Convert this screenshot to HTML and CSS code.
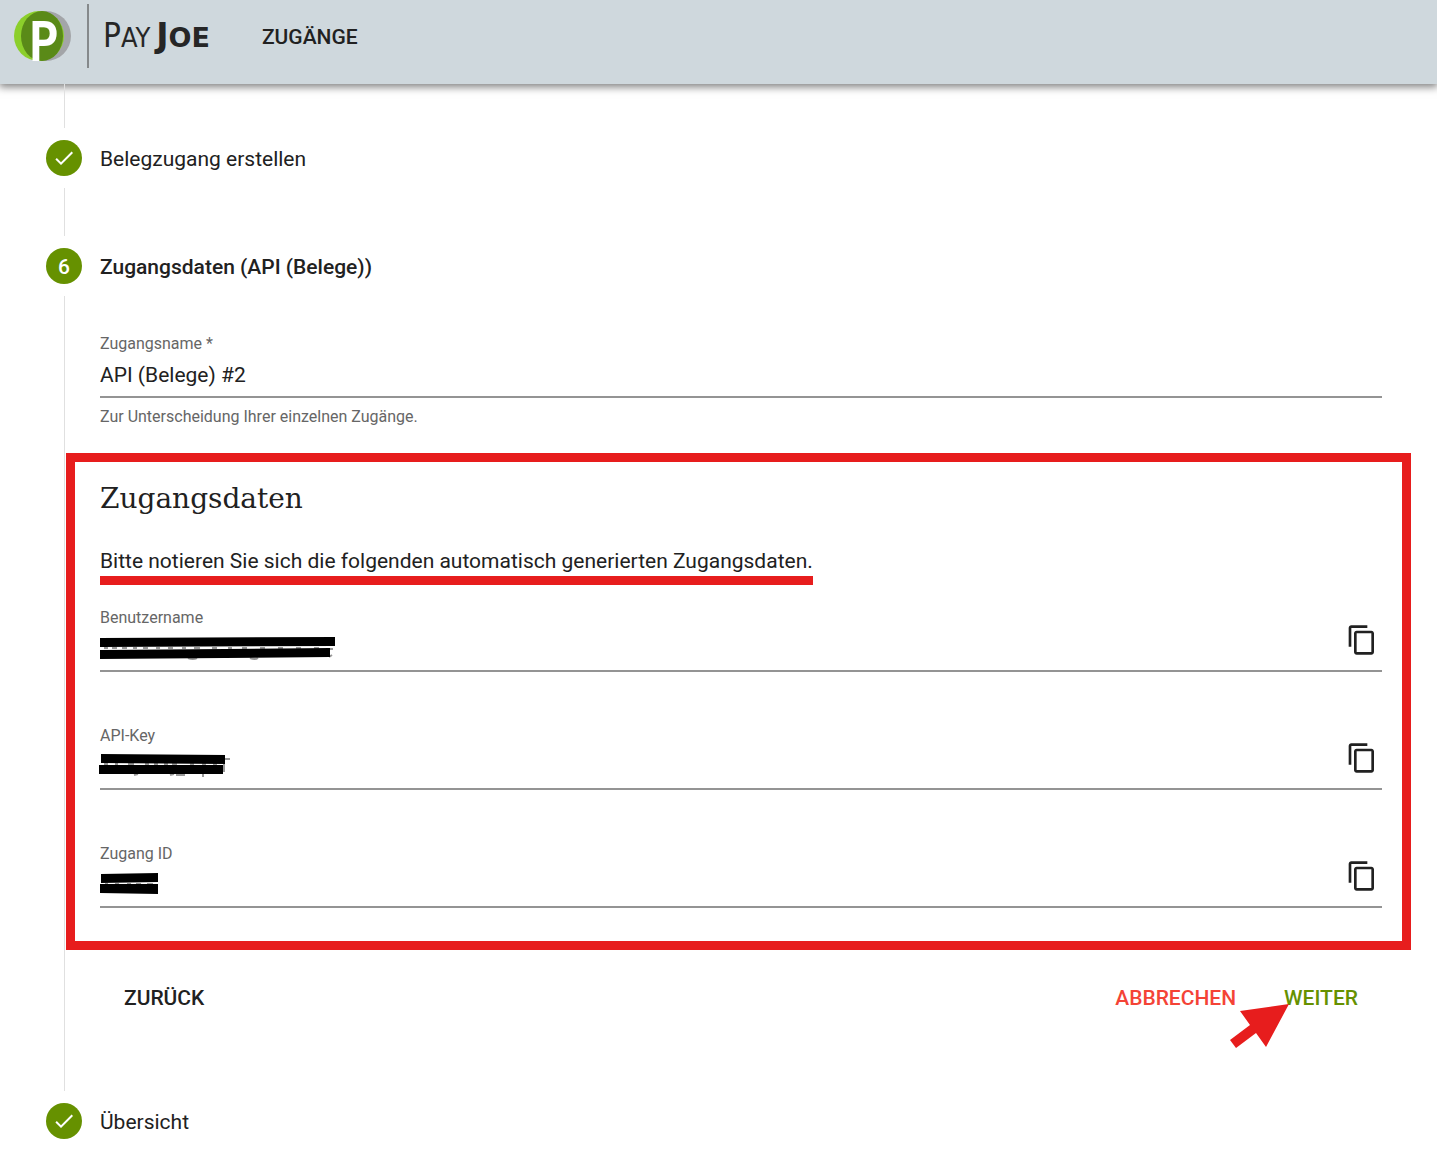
FILE: index.html
```html
<!DOCTYPE html>
<html lang="de">
<head>
<meta charset="utf-8">
<meta name="viewport" content="width=device-width, initial-scale=1">
<title>PayJoe – Zugänge</title>
<link rel="stylesheet" href="styles.css">
</head>
<body>
<svg class="sprite" aria-hidden="true">
  <symbol id="icon-copy" viewBox="0 0 24 24"><path d="M16 1H4c-1.100 0-2 .9-2 2v14h2V3h12V1zm3 4H8c-1.100 0-2 .9-2 2v14c0 1.100.9 2 2 2h11c1.100 0 2-.9 2-2V7c0-1.100-.9-2-2-2zm0 16H8V7h11v14z"/></symbol>
  <symbol id="icon-check" viewBox="0 0 24 24"><path d="M9 16.200L4.800 12l-1.400 1.400L9 19 21 7l-1.400-1.400L9 16.200z"/></symbol>
</svg>

<header class="topbar">
  <a class="brand" href="#" aria-label="PayJoe">
    <svg class="brand-mark" viewBox="0 0 58 64" aria-hidden="true">
      <circle cx="33" cy="32" r="25" fill="#a3a5a8"/>
      <circle cx="26" cy="32" r="25" fill="#8ccf2b"/>
      <ellipse cx="29" cy="32" rx="21" ry="25" fill="#5a8a18"/>
      <text class="brand-p" x="16" y="56">P</text>
    </svg>
    <span class="brand-name"><span class="brand-pay">P<small>AY</small></span><span class="brand-joe">J<small>OE</small></span></span>
  </a>
  <nav><a class="nav-link" href="#">ZUGÄNGE</a></nav>
</header>

<main class="stepper">
  <div class="step-line step-line-first"></div>

  <div class="step-head">
    <span class="step-badge"><svg viewBox="0 0 24 24" aria-hidden="true"><use href="#icon-check"/></svg></span>
    <span class="step-title">Belegzugang erstellen</span>
  </div>
  <div class="step-line"></div>

  <div class="step-head step-active">
    <span class="step-badge"><span class="step-number">6</span></span>
    <span class="step-title">Zugangsdaten (API (Belege))</span>
  </div>

  <form class="step-body">
    <div class="field">
      <label for="name">Zugangsname *</label>
      <div class="control"><input id="name" type="text" value="API (Belege) #2"></div>
      <p class="hint">Zur Unterscheidung Ihrer einzelnen Zugänge.</p>
    </div>

    <section class="credentials">
      <h2>Zugangsdaten</h2>
      <p class="notice">Bitte notieren Sie sich die folgenden automatisch generierten Zugangsdaten.</p>

      <div class="field">
        <label for="user">Benutzername</label>
        <div class="control">
          <input id="user" type="text" readonly>
          <svg class="redaction" viewBox="0 0 240 42" aria-hidden="true">
            <path class="trace" d="M4 20h4M12 20h5M22 20h5M33 20h4M43 20h5M56 20h4M68 20h5M82 20h4M94 20h6M112 20h5M128 20h4M142 20h5M160 20h5M178 20h5M196 20h5M214 20h5M88 30q5 2 9 0M150 30q5 2 8 0M227 21h6M232 27l-3 2"/>
            <path d="M0 10L235 9V18L0 19ZM0 22L230 20V29L0 31Z"/>
          </svg>
          <button class="copy" type="button" aria-label="Benutzername kopieren"><svg viewBox="0 0 24 24" aria-hidden="true"><use href="#icon-copy"/></svg></button>
        </div>
      </div>

      <div class="field">
        <label for="key">API-Key</label>
        <div class="control">
          <input id="key" type="text" readonly>
          <svg class="redaction" viewBox="0 0 240 42" aria-hidden="true">
            <path class="trace" d="M4 18h4M15 18h3M28 18h6M45 18h4M54 18h4M64 18h4M72 18h5M90 18h4M102 18h4M113 18h4M34 29l4-1M70 29l4-1M76 29h9M103 26v5M125 13h5M124 14v12"/>
            <path d="M1 8L125 9V18L1 17ZM-1 19H123V28H-1Z"/>
          </svg>
          <button class="copy" type="button" aria-label="API-Key kopieren"><svg viewBox="0 0 24 24" aria-hidden="true"><use href="#icon-copy"/></svg></button>
        </div>
      </div>

      <div class="field">
        <label for="access">Zugang ID</label>
        <div class="control">
          <input id="access" type="text" readonly>
          <svg class="redaction" viewBox="0 0 240 42" aria-hidden="true">
            <path class="trace" d="M5 20h3M15 20h4M27 20h4M36 20h5M47 20h6"/>
            <path d="M1 10L58 9V18L1 19ZM0 20H58V30L0 29Z"/>
          </svg>
          <button class="copy" type="button" aria-label="Zugang ID kopieren"><svg viewBox="0 0 24 24" aria-hidden="true"><use href="#icon-copy"/></svg></button>
        </div>
      </div>
    </section>

    <div class="actions">
      <button class="btn btn-back" type="button">ZURÜCK</button>
      <button class="btn btn-cancel" type="button">ABBRECHEN</button>
      <button class="btn btn-next" type="submit">WEITER
        <svg class="pointer" viewBox="0 0 60 45" aria-hidden="true"><path d="M59 1L10 8L20 22L0 37L6 45L26 30L36 44Z"/></svg>
      </button>
    </div>
  </form>

  <div class="step-head">
    <span class="step-badge"><svg viewBox="0 0 24 24" aria-hidden="true"><use href="#icon-check"/></svg></span>
    <span class="step-title">Übersicht</span>
  </div>
</main>
</body>
</html>
```
FILE: styles.css
```css
* {
  box-sizing: border-box;
}

body {
  margin: 0;
  background: #fff;
  color: #212121;
  font: 400 21px/30px Roboto, "Liberation Sans", sans-serif;
}

h2,
p {
  margin: 0;
}

button,
input {
  font: inherit;
  color: inherit;
}

.sprite {
  display: none;
}

/* Top bar */
.topbar {
  display: flex;
  align-items: flex-start;
  gap: 52px;
  height: 84px;
  padding: 4px 13px;
  background: #cfd8dd;
  box-shadow: 0 2px 8px 1px rgba(0, 0, 0, 0.5);
}

.brand {
  display: flex;
  align-items: center;
  gap: 16px;
  height: 64px;
  color: #262626;
  text-decoration: none;
}

.brand-mark {
  width: 58px;
  height: 64px;
  overflow: visible;
}

.brand-p {
  fill: #fff;
  stroke: #fff;
  stroke-width: 2px;
  font: 400 52px "DejaVu Sans Condensed", "DejaVu Sans", sans-serif;
}

.brand-name {
  display: flex;
  align-items: center;
  gap: 6px;
  height: 64px;
  padding: 2px 0 0 14px;
  border-left: 2px solid #85898b;
  font: 400 33px/40px "DejaVu Sans Condensed", "DejaVu Sans", sans-serif;
}

.brand-name small {
  font-size: 27px;
}

.brand-joe {
  font-family: "DejaVu Sans", sans-serif;
  font-weight: 700;
}

.nav-link {
  display: block;
  color: inherit;
  font-weight: 500;
  line-height: 66px;
  text-decoration: none;
}

/* Stepper */
.stepper {
  padding: 0 55px 22px 46px;
}

.step-line {
  height: 48px;
  margin-left: 18px;
  border-left: 1px solid #e0e0e0;
}

.step-line-first {
  height: 44px;
}

.step-head {
  display: flex;
  align-items: center;
  gap: 18px;
  height: 60px;
}

.step-title,
.step-number {
  padding-top: 2px;
}

.step-active {
  font-weight: 500;
}

.step-badge {
  display: flex;
  align-items: center;
  justify-content: center;
  width: 36px;
  height: 36px;
  border-radius: 50%;
  background: #669100;
  color: #fff;
}

.step-badge svg {
  width: 24px;
  height: 24px;
  fill: #fff;
}

.step-body {
  margin-left: 18px;
  padding: 38px 0 66px 35px;
  border-left: 1px solid #e0e0e0;
}

/* Form fields */
.field label,
.hint {
  display: block;
  color: #666;
  font-size: 16px;
  line-height: 20px;
}

.control {
  position: relative;
  display: flex;
  align-items: flex-start;
  height: 44px;
  border-bottom: 2px solid #949494;
}

.control input {
  flex: 1;
  min-width: 0;
  height: 42px;
  padding: 0;
  border: 0;
  outline: 0;
  background: none;
}

.hint {
  margin-top: 9px;
}

.redaction {
  position: absolute;
  top: 0;
  left: 0;
  width: 240px;
  height: 42px;
  overflow: visible;
  pointer-events: none;
}

.redaction .trace {
  fill: none;
  stroke: #999;
  stroke-width: 2;
}

.copy {
  display: flex;
  align-items: center;
  justify-content: center;
  width: 40px;
  height: 40px;
  margin-top: -8px;
  padding: 0;
  border: 0;
  background: none;
}

.copy svg {
  width: 32px;
  height: 32px;
  fill: #212121;
}

/* Highlighted credentials */
.credentials {
  margin: 26px -29px 0 -34px;
  padding: 19px 20px 33px 25px;
  border: 9px solid #e71d1d;
}

.credentials h2 {
  font: 400 28px/36px "Roboto Slab", "DejaVu Serif", serif;
}

.notice {
  width: fit-content;
  margin: 29px 0 23px;
  border-bottom: 9px solid #e71d1d;
}

.credentials .field + .field {
  margin-top: 54px;
}

/* Actions */
.actions {
  display: flex;
  margin-top: 21px;
}

.btn {
  position: relative;
  height: 54px;
  padding: 0 24px;
  border: 0;
  background: none;
  font-weight: 500;
}

.btn-back {
  margin-right: auto;
}

.btn-cancel {
  color: #f44336;
}

.btn-next {
  color: #669100;
}

.pointer {
  position: absolute;
  top: 32px;
  left: -30px;
  width: 60px;
  height: 45px;
  fill: #e71d1d;
}
```
